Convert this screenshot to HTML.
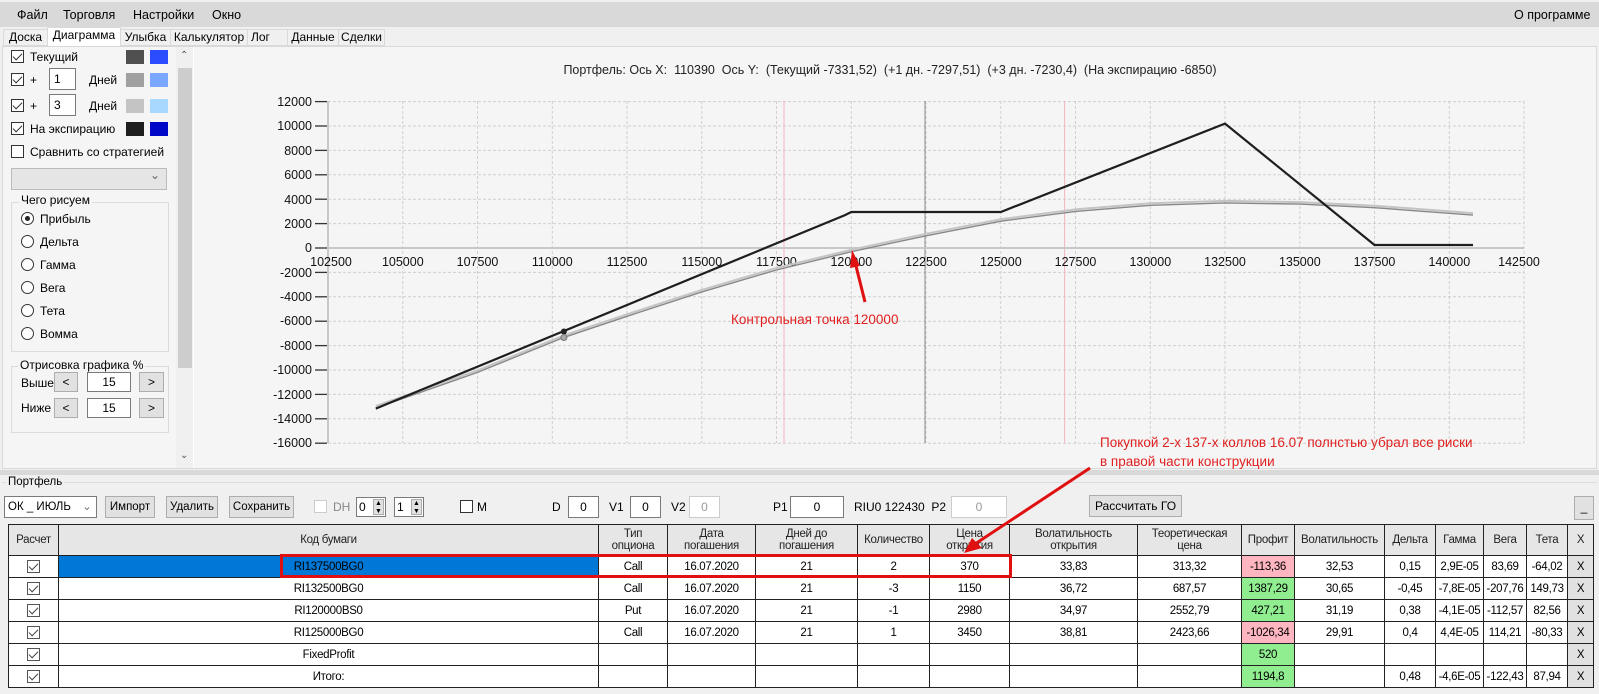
<!DOCTYPE html>
<html><head><meta charset="utf-8"><style>
*{box-sizing:border-box;margin:0;padding:0}
body{width:1599px;height:694px;overflow:hidden;background:#f0f0f0;font-family:"Liberation Sans","DejaVu Sans",sans-serif;font-size:12px;color:#000;position:relative}
.a{position:absolute;white-space:nowrap}
.cb{position:absolute;width:13px;height:13px;border:1px solid #333;background:#fff}
.cb.k::after{content:"";position:absolute;left:3px;top:0px;width:4px;height:8px;border:solid #333;border-width:0 1px 1px 0;transform:rotate(45deg)}
.ic{display:inline-block;position:relative;width:13px;height:13px;border:1px solid #555;background:#fff;vertical-align:middle}
.ic::after{content:"";position:absolute;left:3px;top:0px;width:4px;height:8px;border:solid #444;border-width:0 1px 1px 0;transform:rotate(45deg)}
.sw{position:absolute;width:18px;height:14px}
.tb{position:absolute;border:1px solid #7a7a7a;background:#fff;text-align:center;height:22px;line-height:20px}
.btn{position:absolute;border:1px solid #adadad;background:#e1e1e1;text-align:center;line-height:20px;height:22px}
.rd{position:absolute;width:13px;height:13px;border:1px solid #333;border-radius:50%;background:#fff}
.tab{position:absolute;top:29px;height:17px;border:1px solid #d9d9d9;background:#f0f0f0;text-align:center;line-height:15px;font-size:12px}
table{position:absolute;left:8px;top:524px;border-collapse:collapse;font-size:11.5px;letter-spacing:-0.3px;background:#fff}
td{border:1px solid #222;text-align:center;height:22px;padding:0;line-height:12px}
tr.h td{background:#e6e6e6;height:31px;color:#222}
td.p{background:#ffb6c1}td.g{background:#90ee90}
.x{background:#e1e1e1}
</style></head><body>
<div class="a" style="left:0;top:2px;width:1599px;height:25px;background:#d9d9d9"></div>
<div class="a" style="left:17px;top:8px;font-size:12.5px">Файл</div>
<div class="a" style="left:63px;top:8px;font-size:12.5px">Торговля</div>
<div class="a" style="left:133px;top:8px;font-size:12.5px">Настройки</div>
<div class="a" style="left:212px;top:8px;font-size:12.5px">Окно</div>
<div class="a" style="left:1514px;top:8px;font-size:12.5px">О программе</div>
<div class="tab" style="left:3px;width:45px">Доска</div>
<div class="tab" style="left:47px;width:74px;top:27px;height:20px;background:#fff;border-bottom:none">Диаграмма</div>
<div class="tab" style="left:120px;width:51px">Улыбка</div>
<div class="tab" style="left:170px;width:78px">Калькулятор</div>
<div class="tab" style="left:247px;width:41px;text-align:left;padding-left:3px">Лог</div>
<div class="tab" style="left:287px;width:52px">Данные</div>
<div class="tab" style="left:338px;width:47px">Сделки</div>
<div class="a" style="left:2px;top:46px;width:1595px;height:423px;background:#fff;border:1px solid #d9d9d9"></div>
<div class="a" style="left:3px;top:47px;width:173px;height:421px;background:#f5f5f5"></div>
<div class="cb k" style="left:11px;top:50px"></div><div class="a" style="left:30px;top:50px">Текущий</div>
<div class="sw" style="left:126px;top:50px;background:#505050"></div><div class="sw" style="left:150px;top:50px;background:#2a4dff"></div>
<div class="cb k" style="left:11px;top:73px"></div><div class="a" style="left:30px;top:73px">+</div>
<div class="tb" style="left:49px;top:68px;width:27px;text-align:left;padding-left:4px">1</div><div class="a" style="left:89px;top:73px">Дней</div>
<div class="sw" style="left:126px;top:73px;background:#a0a0a0"></div><div class="sw" style="left:150px;top:73px;background:#7aa7ff"></div>
<div class="cb k" style="left:11px;top:99px"></div><div class="a" style="left:30px;top:99px">+</div>
<div class="tb" style="left:49px;top:94px;width:27px;text-align:left;padding-left:4px">3</div><div class="a" style="left:89px;top:99px">Дней</div>
<div class="sw" style="left:126px;top:99px;background:#c4c4c4"></div><div class="sw" style="left:150px;top:99px;background:#a8d8ff"></div>
<div class="cb k" style="left:11px;top:122px"></div><div class="a" style="left:30px;top:122px">На экспирацию</div>
<div class="sw" style="left:126px;top:122px;background:#1e1e1e"></div><div class="sw" style="left:150px;top:122px;background:#0008c8"></div>
<div class="cb" style="left:11px;top:145px"></div><div class="a" style="left:30px;top:145px">Сравнить со стратегией</div>
<div class="a" style="left:11px;top:168px;width:156px;height:22px;background:#e5e5e5;border:1px solid #bbb"></div>
<div class="a" style="left:150px;top:168px;color:#666">&#8964;</div>
<div class="a" style="left:11px;top:202px;width:158px;height:150px;border:1px solid #dcdcdc"></div>
<div class="a" style="left:19px;top:193px;background:#f5f5f5;padding:0 2px">Чего рисуем</div>
<div class="rd" style="left:21px;top:212px"><div class="a" style="left:3px;top:3px;width:5px;height:5px;border-radius:50%;background:#222"></div></div><div class="a" style="left:40px;top:212px">Прибыль</div>
<div class="rd" style="left:21px;top:235px"></div><div class="a" style="left:40px;top:235px">Дельта</div>
<div class="rd" style="left:21px;top:258px"></div><div class="a" style="left:40px;top:258px">Гамма</div>
<div class="rd" style="left:21px;top:281px"></div><div class="a" style="left:40px;top:281px">Вега</div>
<div class="rd" style="left:21px;top:304px"></div><div class="a" style="left:40px;top:304px">Тета</div>
<div class="rd" style="left:21px;top:327px"></div><div class="a" style="left:40px;top:327px">Вомма</div>
<div class="a" style="left:11px;top:366px;width:158px;height:67px;border:1px solid #dcdcdc"></div>
<div class="a" style="left:18px;top:358px;background:#f5f5f5;padding:0 2px">Отрисовка графика %</div>
<div class="a" style="left:21px;top:376px">Выше</div>
<div class="btn" style="left:54px;top:372px;width:24px;height:20px;line-height:18px">&lt;</div>
<div class="tb" style="left:87px;top:372px;width:44px;height:20px;line-height:18px">15</div>
<div class="btn" style="left:139px;top:372px;width:25px;height:20px;line-height:18px">&gt;</div>
<div class="a" style="left:21px;top:401px">Ниже</div>
<div class="btn" style="left:54px;top:398px;width:24px;height:20px;line-height:18px">&lt;</div>
<div class="tb" style="left:87px;top:398px;width:44px;height:20px;line-height:18px">15</div>
<div class="btn" style="left:139px;top:398px;width:25px;height:20px;line-height:18px">&gt;</div>
<div class="a" style="left:176px;top:47px;width:17px;height:421px;background:#f0f0f0"></div>
<div class="a" style="left:178px;top:68px;width:14px;height:300px;background:#cdcdcd"></div>
<div class="a" style="left:180px;top:50px;font-size:10px;color:#555">&#8963;</div>
<div class="a" style="left:180px;top:450px;font-size:10px;color:#555">&#8964;</div>
<div class="a" style="left:194px;top:47px;width:1402px;height:421px;background:#f5f5f5"></div>
<div class="a" style="left:890px;top:63px;transform:translateX(-50%);font-size:12.5px;color:#222">Портфель: Ось X: &nbsp;110390 &nbsp;Ось Y: &nbsp;(Текущий -7331,52) &nbsp;(+1 дн. -7297,51) &nbsp;(+3 дн. -7230,4) &nbsp;(На экспирацию -6850)</div>
<svg class="a" style="left:0;top:0" width="1599" height="694" viewBox="0 0 1599 694" font-family="Liberation Sans, sans-serif" font-size="12.5">
<g stroke="#cfcfcf" stroke-dasharray="3,2" stroke-width="1">
<line x1="328" y1="101.6" x2="1524" y2="101.6"/><line x1="328" y1="126" x2="1524" y2="126"/><line x1="328" y1="150.4" x2="1524" y2="150.4"/><line x1="328" y1="174.8" x2="1524" y2="174.8"/><line x1="328" y1="199.2" x2="1524" y2="199.2"/><line x1="328" y1="223.6" x2="1524" y2="223.6"/><line x1="328" y1="272.4" x2="1524" y2="272.4"/><line x1="328" y1="296.8" x2="1524" y2="296.8"/><line x1="328" y1="321.2" x2="1524" y2="321.2"/><line x1="328" y1="345.6" x2="1524" y2="345.6"/><line x1="328" y1="370" x2="1524" y2="370"/><line x1="328" y1="394.4" x2="1524" y2="394.4"/><line x1="328" y1="418.8" x2="1524" y2="418.8"/><line x1="328" y1="443.2" x2="1524" y2="443.2"/>
<line x1="402.8" y1="101" x2="402.8" y2="443"/><line x1="477.5" y1="101" x2="477.5" y2="443"/><line x1="552.3" y1="101" x2="552.3" y2="443"/><line x1="627" y1="101" x2="627" y2="443"/><line x1="701.8" y1="101" x2="701.8" y2="443"/><line x1="776.5" y1="101" x2="776.5" y2="443"/><line x1="851.3" y1="101" x2="851.3" y2="443"/><line x1="926" y1="101" x2="926" y2="443"/><line x1="1000.8" y1="101" x2="1000.8" y2="443"/><line x1="1075.5" y1="101" x2="1075.5" y2="443"/><line x1="1150.3" y1="101" x2="1150.3" y2="443"/><line x1="1225" y1="101" x2="1225" y2="443"/><line x1="1299.8" y1="101" x2="1299.8" y2="443"/><line x1="1374.5" y1="101" x2="1374.5" y2="443"/><line x1="1449.3" y1="101" x2="1449.3" y2="443"/><line x1="1524" y1="101" x2="1524" y2="443"/>
</g>
<line x1="784" y1="101" x2="784" y2="443" stroke="#f5b5c0"/>
<line x1="1064.6" y1="101" x2="1064.6" y2="443" stroke="#f5b5c0"/>
<line x1="925" y1="101" x2="925" y2="443" stroke="#8a8a8a"/>
<line x1="328" y1="101" x2="328" y2="443" stroke="#c8c8c8" stroke-width="2"/>
<line x1="328" y1="248" x2="1524" y2="248" stroke="#c8c8c8" stroke-width="2"/>
<g stroke="#333" stroke-width="1.3">
<line x1="315" y1="101.6" x2="327" y2="101.6"/><line x1="315" y1="126" x2="327" y2="126"/><line x1="315" y1="150.4" x2="327" y2="150.4"/><line x1="315" y1="174.8" x2="327" y2="174.8"/><line x1="315" y1="199.2" x2="327" y2="199.2"/><line x1="315" y1="223.6" x2="327" y2="223.6"/><line x1="315" y1="248" x2="327" y2="248"/><line x1="315" y1="272.4" x2="327" y2="272.4"/><line x1="315" y1="296.8" x2="327" y2="296.8"/><line x1="315" y1="321.2" x2="327" y2="321.2"/><line x1="315" y1="345.6" x2="327" y2="345.6"/><line x1="315" y1="370" x2="327" y2="370"/><line x1="315" y1="394.4" x2="327" y2="394.4"/><line x1="315" y1="418.8" x2="327" y2="418.8"/><line x1="315" y1="443.2" x2="327" y2="443.2"/>
</g>
<g text-anchor="end" fill="#111">
<text x="312" y="106">12000</text><text x="312" y="130">10000</text><text x="312" y="155">8000</text><text x="312" y="179">6000</text><text x="312" y="204">4000</text><text x="312" y="228">2000</text><text x="312" y="252">0</text><text x="312" y="277">-2000</text><text x="312" y="301">-4000</text><text x="312" y="325">-6000</text><text x="312" y="350">-8000</text><text x="312" y="374">-10000</text><text x="312" y="399">-12000</text><text x="312" y="423">-14000</text><text x="312" y="447">-16000</text>
</g>
<g text-anchor="middle" fill="#111">
<text x="331" y="266">102500</text><text x="402.8" y="266">105000</text><text x="477.5" y="266">107500</text><text x="552.3" y="266">110000</text><text x="627" y="266">112500</text><text x="701.8" y="266">115000</text><text x="776.5" y="266">117500</text><text x="851.3" y="266">120000</text><text x="926" y="266">122500</text><text x="1000.8" y="266">125000</text><text x="1075.5" y="266">127500</text><text x="1150.3" y="266">130000</text><text x="1225" y="266">132500</text><text x="1299.8" y="266">135000</text><text x="1374.5" y="266">137500</text><text x="1449.3" y="266">140000</text><text x="1519" y="266">142500</text>
</g>
<polyline fill="none" stroke="#c4c4c4" stroke-width="2" points="375.8,406 477.5,370.4 563.9,335.4 627,314.3 701.8,289.9 776.5,268 851.3,249.7 926,233.8 1000.8,219.2 1075.5,209.4 1150.3,203.3 1225,200.9 1299.8,202.1 1374.5,205.7 1473,213.1"/>
<polyline fill="none" stroke="#888" stroke-width="1.4" points="375.8,408 477.5,372.4 563.9,337.4 627,316.3 701.8,291.9 776.5,270 851.3,251.7 926,235.8 1000.8,221.2 1075.5,211.4 1150.3,205.3 1225,202.9 1299.8,204.1 1374.5,207.7 1473,215.1"/>
<polyline fill="none" stroke="#1e1e1e" stroke-width="2.2" points="375.8,408.6 845,215.1 851.3,212 1000.8,212 1225,123.6 1374.5,245 1473,245"/>
<circle cx="563.9" cy="331.5" r="3" fill="#222"/>
<circle cx="563.9" cy="337.5" r="3" fill="#aaa" stroke="#777"/>
<line x1="865" y1="302" x2="855" y2="262" stroke="#e01010" stroke-width="3"/>
<polygon points="852,250 860,266 850,268" fill="#e01010"/>
<text x="731" y="324" fill="#e02020" font-size="13.5">Контрольная точка 120000</text>
<text x="1100" y="447" fill="#e02020" font-size="13.5">Покупкой 2-х 137-х коллов 16.07 полнстью убрал все риски</text>
<text x="1100" y="466" fill="#e02020" font-size="13.5">в правой части конструкции</text>
</svg>
<div class="a" style="left:0;top:470px;width:1599px;height:5px;background:#d9d9d9"></div>
<div class="a" style="left:2px;top:482px;width:1595px;height:1px;background:#dcdcdc"></div>
<div class="a" style="left:6px;top:476px;font-size:11.5px;background:#f0f0f0;padding:0 2px">Портфель</div>
<div class="tb" style="left:4px;top:496px;width:93px;text-align:left;padding-left:3px;font-size:11.5px">ОК _ ИЮЛЬ <span style="color:#777;margin-left:8px">&#8964;</span></div>
<div class="btn" style="left:105px;top:496px;width:50px;font-size:11.5px">Импорт</div>
<div class="btn" style="left:166px;top:496px;width:52px;font-size:11.5px">Удалить</div>
<div class="btn" style="left:229px;top:496px;width:65px;font-size:11.5px">Сохранить</div>
<div class="cb" style="left:314px;top:500px;border-color:#ccc"></div><div class="a" style="left:333px;top:500px;color:#888">DH</div>
<div class="tb" style="left:356px;top:497px;width:30px;height:20px;text-align:left;padding-left:2px;line-height:18px">0</div>
<div class="btn" style="left:373px;top:499px;width:11px;height:16px;font-size:7px;line-height:8px">▲<br>▼</div>
<div class="tb" style="left:394px;top:497px;width:30px;height:20px;text-align:left;padding-left:2px;line-height:18px">1</div>
<div class="btn" style="left:411px;top:499px;width:11px;height:16px;font-size:7px;line-height:8px">▲<br>▼</div>
<div class="cb" style="left:460px;top:500px"></div><div class="a" style="left:477px;top:500px">M</div>
<div class="a" style="left:552px;top:500px">D</div><div class="tb" style="left:568px;top:496px;width:31px">0</div>
<div class="a" style="left:609px;top:500px">V1</div><div class="tb" style="left:630px;top:496px;width:31px">0</div>
<div class="a" style="left:671px;top:500px">V2</div><div class="tb" style="left:689px;top:496px;width:31px;border-color:#ccc;color:#999">0</div>
<div class="a" style="left:773px;top:500px">P1</div><div class="tb" style="left:790px;top:496px;width:54px">0</div>
<div class="a" style="left:854px;top:500px">RIU0 122430 &nbsp;P2</div><div class="tb" style="left:951px;top:496px;width:56px;border-color:#ccc;color:#999">0</div>
<div class="btn" style="left:1089px;top:495px;width:93px">Рассчитать ГО</div>
<div class="btn" style="left:1574px;top:496px;width:20px;height:24px">_</div>
<table>
<colgroup><col style="width:50px"><col style="width:540px"><col style="width:69px"><col style="width:88px"><col style="width:102px"><col style="width:72px"><col style="width:80px"><col style="width:128px"><col style="width:104px"><col style="width:53px"><col style="width:90px"><col style="width:51px"><col style="width:48px"><col style="width:43px"><col style="width:41px"><col style="width:26px"></colgroup>
<tr class="h"><td>Расчет</td><td>Код бумаги</td><td>Тип<br>опциона</td><td>Дата<br>погашения</td><td>Дней до<br>погашения</td><td>Количество</td><td>Цена<br>открытия</td><td>Волатильность<br>открытия</td><td>Теоретическая<br>цена</td><td>Профит</td><td>Волатильность</td><td>Дельта</td><td>Гамма</td><td>Вега</td><td>Тета</td><td>X</td></tr>
<tr><td><span class="ic"></span></td><td style="background:#0078d7">RI137500BG0</td><td>Call</td><td>16.07.2020</td><td>21</td><td>2</td><td>370</td><td>33,83</td><td>313,32</td><td class="p">-113,36</td><td>32,53</td><td>0,15</td><td>2,9E-05</td><td>83,69</td><td>-64,02</td><td class="x">X</td></tr>
<tr><td><span class="ic"></span></td><td>RI132500BG0</td><td>Call</td><td>16.07.2020</td><td>21</td><td>-3</td><td>1150</td><td>36,72</td><td>687,57</td><td class="g">1387,29</td><td>30,65</td><td>-0,45</td><td>-7,8E-05</td><td>-207,76</td><td>149,73</td><td class="x">X</td></tr>
<tr><td><span class="ic"></span></td><td>RI120000BS0</td><td>Put</td><td>16.07.2020</td><td>21</td><td>-1</td><td>2980</td><td>34,97</td><td>2552,79</td><td class="g">427,21</td><td>31,19</td><td>0,38</td><td>-4,1E-05</td><td>-112,57</td><td>82,56</td><td class="x">X</td></tr>
<tr><td><span class="ic"></span></td><td>RI125000BG0</td><td>Call</td><td>16.07.2020</td><td>21</td><td>1</td><td>3450</td><td>38,81</td><td>2423,66</td><td class="p">-1026,34</td><td>29,91</td><td>0,4</td><td>4,4E-05</td><td>114,21</td><td>-80,33</td><td class="x">X</td></tr>
<tr><td><span class="ic"></span></td><td>FixedProfit</td><td></td><td></td><td></td><td></td><td></td><td></td><td></td><td class="g">520</td><td></td><td></td><td></td><td></td><td></td><td class="x">X</td></tr>
<tr><td><span class="ic"></span></td><td>Итого:</td><td></td><td></td><td></td><td></td><td></td><td></td><td></td><td class="g">1194,8</td><td></td><td>0,48</td><td>-4,6E-05</td><td>-122,43</td><td>87,94</td><td class="x">X</td></tr>
</table>
<div class="a" style="left:280px;top:554px;width:732px;height:24px;border:3px solid #e01010"></div>
<svg class="a" style="left:0;top:0" width="1599" height="694"><line x1="1090" y1="468" x2="975" y2="544" stroke="#e01010" stroke-width="3"/><polygon points="964,553 972,538 982,548" fill="#e01010"/></svg>
</body></html>
